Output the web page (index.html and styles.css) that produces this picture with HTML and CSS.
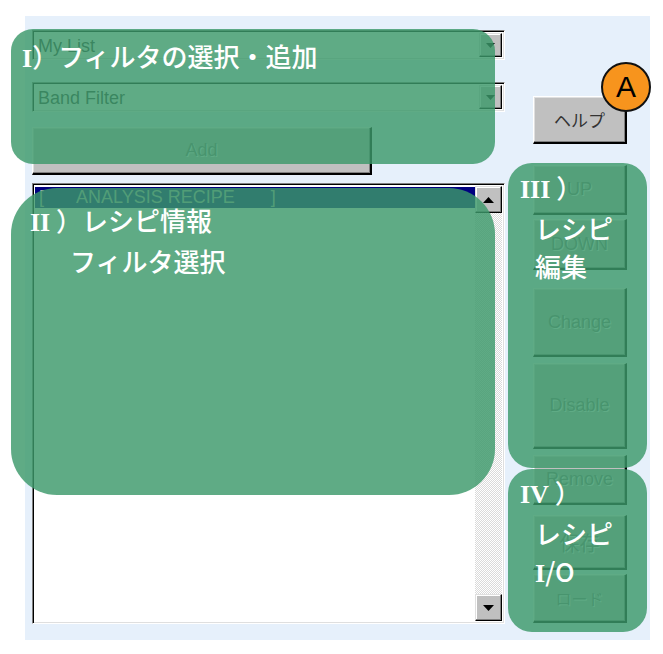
FILE: index.html
```html
<!DOCTYPE html>
<html lang="ja">
<head>
<meta charset="utf-8">
<title>Recipe</title>
<link rel="stylesheet" href="styles.css">
</head>
<body>
<div class="panel">
  <div class="left">
    <div class="combo">
      <span class="combo-text">My List</span>
      <span class="combo-btn"><svg width="9" height="5" viewBox="0 0 9 5"><path d="M0 0H9L4.5 5Z" fill="#000"/></svg></span>
    </div>
    <div class="combo combo2">
      <span class="combo-text">Band Filter</span>
      <span class="combo-btn"><svg width="9" height="5" viewBox="0 0 9 5"><path d="M0 0H9L4.5 5Z" fill="#000"/></svg></span>
    </div>
    <div class="btn dis add">Add</div>
    <div class="listbox">
      <div class="list-items">
        <div class="item sel"><span>[</span><span class="item-name">ANALYSIS RECIPE</span><span>]</span></div>
      </div>
      <div class="scrollbar">
        <div class="sb-btn"><svg width="11" height="6" viewBox="0 0 11 6"><path d="M5.5 0L11 6H0Z" fill="#000"/></svg></div>
        <div class="sb-track"></div>
        <div class="sb-btn"><svg width="11" height="6" viewBox="0 0 11 6"><path d="M0 0H11L5.5 6Z" fill="#000"/></svg></div>
      </div>
    </div>
  </div>
  <div class="right">
    <div class="btn help">ヘルプ</div>
    <div class="btn dis b-up">UP</div>
    <div class="btn dis b-down">DOWN</div>
    <div class="btn dis b-change">Change</div>
    <div class="btn dis b-disable">Disable</div>
    <div class="btn dis b-remove">Remove</div>
    <div class="btn dis b-save">保存</div>
    <div class="btn dis b-load">ロード</div>
  </div>

  <div class="overlay ov1">
    <div class="lbl"><span class="rn">I</span>）フィルタの選択・追加</div>
  </div>
  <div class="overlay ov2">
    <div class="lbl"><span class="rn">II</span> ）レシピ情報</div>
    <div class="lbl ind2">フィルタ選択</div>
  </div>
  <div class="overlay ov3">
    <div class="lbl"><span class="rn">III</span> ）</div>
    <div class="lbl ind">レシピ</div>
    <div class="lbl ind">編集</div>
  </div>
  <div class="overlay ov4">
    <div class="lbl"><span class="rn">IV</span> ）</div>
    <div class="lbl ind">レシピ</div>
    <div class="lbl ind"><span class="rn">I</span>/O</div>
  </div>
  <div class="badge">A</div>
</div>
</body>
</html>
```

FILE: styles.css
```css
html, body {
  margin: 0;
  padding: 0;
  background: #ffffff;
}
body {
  font-family: "Liberation Sans", "Noto Sans CJK JP", sans-serif;
}
.panel {
  position: relative;
  margin: 16px 0 0 25px;
  width: 625px;
  height: 624px;
  box-sizing: border-box;
  padding: 14px 0 16px 7px;
  background: #e6f0fb;
  display: grid;
  grid-template-columns: 473px 94px;
  column-gap: 28px;
}
.left {
  display: flex;
  flex-direction: column;
  min-height: 0;
}
.right {
  display: flex;
  flex-direction: column;
}

/* combo boxes */
.combo {
  height: 30px;
  box-sizing: border-box;
  background: #ffffff;
  border-top: 1px solid #808080;
  border-left: 1px solid #808080;
  border-right: 1px solid #ffffff;
  border-bottom: 1px solid #ffffff;
  box-shadow: inset 1px 1px #000000, inset -1px -1px #dfdfdf;
  display: flex;
  align-items: center;
  padding: 2px;
}
.combo2 { margin-top: 22px; }
.combo-text {
  flex: 1;
  padding-left: 3px;
  padding-top: 2px;
  font-size: 18px;
  color: #333333;
}
.combo-btn {
  width: 23px;
  height: 100%;
  box-sizing: border-box;
  background: #c0c0c0;
  border-top: 1px solid #dfdfdf;
  border-left: 1px solid #dfdfdf;
  border-right: 1px solid #000000;
  border-bottom: 1px solid #000000;
  box-shadow: inset -1px -1px #808080, inset 1px 1px #ffffff;
  display: flex;
  align-items: center;
  justify-content: center;
}

/* buttons */
.btn {
  box-sizing: border-box;
  background: #c0c0c0;
  border-top: 1px solid #ffffff;
  border-left: 1px solid #ffffff;
  border-right: 2px solid #000000;
  border-bottom: 2px solid #000000;
  box-shadow: inset -1px -1px #808080, inset 1px 1px #dfdfdf;
  display: flex;
  align-items: center;
  justify-content: center;
  font-size: 18px;
  color: #000000;
}
.dis {
  color: #808080;
  text-shadow: 1px 1px #ffffff;
}
.add {
  margin-top: 15px;
  width: 340px;
  height: 48px;
}
.help {
  margin-top: 66px;
  height: 48px;
  font-size: 17px;
  color: #333333;
}
.b-up { margin-top: 21px; height: 50px; }
.b-down { margin-top: 4px; height: 51px; }
.b-change { margin-top: 18px; height: 69px; }
.b-disable { margin-top: 6px; height: 86px; }
.b-remove { margin-top: 6px; height: 50px; }
.b-save { margin-top: 10px; height: 55px; font-size: 20px; }
.b-load { margin-top: 4px; height: 49px; font-size: 16px; }

/* listbox */
.listbox {
  margin-top: 8px;
  flex: 1;
  min-height: 0;
  box-sizing: border-box;
  background: #ffffff;
  border-top: 1px solid #808080;
  border-left: 1px solid #808080;
  border-right: 1px solid #ffffff;
  border-bottom: 1px solid #ffffff;
  box-shadow: inset 1px 1px #000000, inset -1px -1px #dfdfdf;
  padding: 2px;
  display: flex;
}
.list-items {
  flex: 1;
  padding-top: 1px;
}
.item {
  height: 21px;
  display: flex;
  align-items: center;
  font-size: 18px;
  padding-left: 4px;
}
.sel {
  background: #000080;
  color: #b0b0b0;
}
.item-name {
  margin-left: 32px;
  margin-right: 36px;
}
.scrollbar {
  width: 27px;
  display: flex;
  flex-direction: column;
}
.sb-btn {
  height: 27px;
  box-sizing: border-box;
  background: #c0c0c0;
  border-top: 1px solid #dfdfdf;
  border-left: 1px solid #dfdfdf;
  border-right: 1px solid #000000;
  border-bottom: 1px solid #000000;
  box-shadow: inset -1px -1px #808080, inset 1px 1px #ffffff;
  display: flex;
  align-items: center;
  justify-content: center;
}
.sb-track {
  flex: 1;
  background: repeating-conic-gradient(#dadada 0 25%, #ffffff 0 50%) 0 0 / 2px 2px;
}

/* overlays */
.overlay {
  position: absolute;
  box-sizing: border-box;
  background: rgba(60, 152, 106, 0.82);
  color: #ffffff;
}
.ov1 {
  left: -14px;
  top: 13px;
  width: 484px;
  height: 135px;
  border-radius: 22px;
  padding: 12px 0 0 11px;
}
.ov2 {
  left: -14px;
  top: 172px;
  width: 484px;
  height: 307px;
  border-radius: 46px;
  padding: 13px 0 0 19px;
}
.ov3 {
  left: 483px;
  top: 147px;
  width: 139px;
  height: 305px;
  border-radius: 24px;
  padding: 5px 0 0 12px;
}
.ov4 {
  left: 483px;
  top: 453px;
  width: 139px;
  height: 163px;
  border-radius: 24px;
  padding: 4px 0 0 12px;
}
.lbl {
  font-family: "Noto Sans CJK JP", sans-serif;
  font-size: 26px;
  font-weight: 500;
  line-height: 38px;
  white-space: nowrap;
}
.ov1 .lbl { line-height: 30px; }
.rn {
  font-family: "Liberation Serif", serif;
  font-weight: 700;
}
.ind { padding-left: 15px; }
.ind2 { padding-left: 40px; }

/* badge */
.badge {
  position: absolute;
  left: 576px;
  top: 46px;
  width: 50px;
  height: 50px;
  box-sizing: border-box;
  border-radius: 50%;
  background: #f7941d;
  border: 2px solid #111111;
  display: flex;
  align-items: center;
  justify-content: center;
  font-size: 30px;
  color: #000000;
  font-family: "Liberation Sans", sans-serif;
}
```
